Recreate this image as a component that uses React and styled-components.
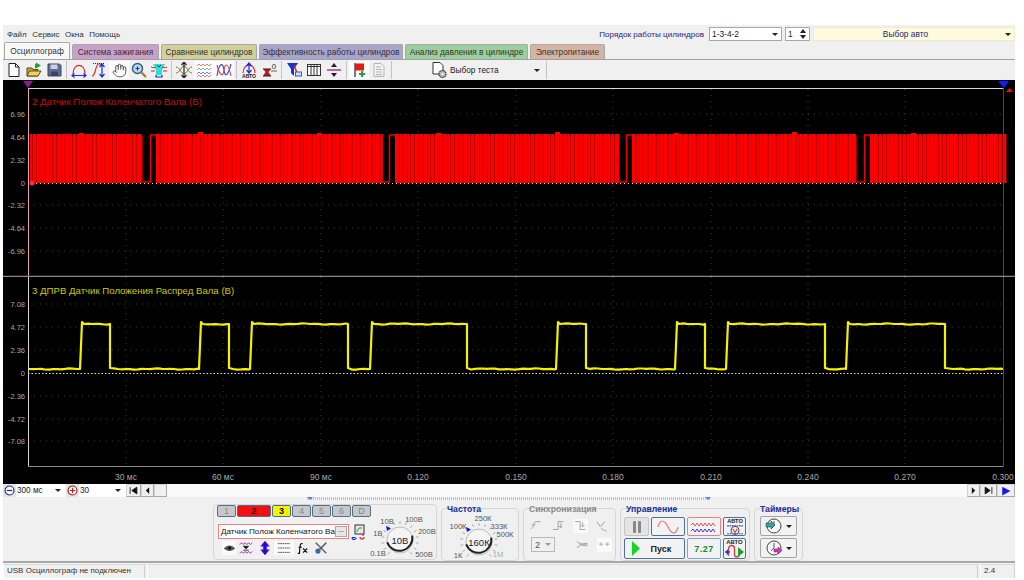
import React from "react";
import styled, { createGlobalStyle } from "styled-components";
import { Hand } from "lucide-react";

const GlobalStyle = createGlobalStyle`
  html, body { margin: 0; background: #fff; }
  body { font-family: "Liberation Sans", Arial, sans-serif; font-size: 8.2px; color: #222; }
`;

// window frame

const Window = styled.div`
  width: 1012px;
  height: 553px;
  margin: 25px 0 0 3px;
  background: #f0f0f0;
  display: flex;
  flex-direction: column;
  overflow: hidden;
`;

const TopBar = styled.div`
  height: 18px;
  display: flex;
  align-items: center;
  padding-left: 4px;
`;

const Menu = styled.div`
  display: flex;
  gap: 5.500px;
  margin-top: 1px;
  font-size: 8px;
  color: #333;
`;

const OrderBlock = styled.div`
  margin-left: auto;
  display: flex;
  align-items: center;
`;

const OrderLabel = styled.span`
  color: #26267e;
  font-size: 8.100px;
  margin-right: 5px;
`;

const Combo = styled.div`
  width: ${({ $w }) => $w}px;
  height: 14px;
  box-sizing: border-box;
  background: ${({ $bg }) => $bg || "#fff"};
  border: 1px solid ${({ $line }) => $line || "#a8a8a8"};
  display: flex;
  align-items: center;
  justify-content: space-between;
  padding: 0 3px 0 2px;
  font-size: 8.400px;
  margin-right: ${({ $last }) => ($last ? 0 : 3)}px;
  color: ${({ $ink }) => $ink || "#222"};
`;

const Chevron = styled.span`
  width: 0;
  height: 0;
  border-left: 3px solid transparent;
  border-right: 3px solid transparent;
  border-top: 3px solid #222;
  flex: none;
`;

const SpinArrows = styled.span`
  display: flex;
  flex-direction: column;
  gap: 2px;
  &::before, &::after {
    content: "";
    border-left: 3px solid transparent;
    border-right: 3px solid transparent;
  }
  &::before { border-bottom: 4px solid #222; }
  &::after { border-top: 4px solid #222; }
`;

const AutoLabel = styled.span`
  flex: 1;
  text-align: center;
  padding-right: 10px;
`;

// tabs

const TabRow = styled.div`
  height: 17px;
  display: flex;
  align-items: flex-end;
  padding-left: 1px;
  gap: 2px;
  border-bottom: 1px solid #a0a0a0;
  box-sizing: border-box;
`;

const Tab = styled.div`
  width: ${({ $w }) => $w}px;
  height: ${({ $active }) => ($active ? 17 : 15)}px;
  box-sizing: border-box;
  background: ${({ $bg }) => $bg};
  border: 1px solid #a8a8a8;
  border-bottom: none;
  border-radius: 2px 2px 0 0;
  display: flex;
  align-items: center;
  justify-content: center;
  font-size: 8.300px;
  color: #333;
  white-space: nowrap;
`;

// toolbar

const Toolbar = styled.div`
  height: 20px;
  display: flex;
  align-items: center;
  padding-left: 1px;
`;

const ToolBtn = styled.div`
  width: 20px;
  height: 18px;
  display: flex;
  align-items: center;
  justify-content: center;
  flex: none;
  background: ${({ $on }) => ($on ? "#fbfbfb" : "transparent")};
`;

const ToolSep = styled.div`
  width: 1px;
  height: 18px;
  background: #c4c4c4;
  margin: 0 2px;
  flex: none;
`;

const TestPicker = styled.div`
  width: 150px;
  height: 18px;
  display: flex;
  align-items: center;
  padding-left: 37px;
  padding-right: 4px;
  box-sizing: border-box;
  gap: 1px;
  font-size: 8.300px;
  & > span:last-child { margin-left: auto; }
`;

// scope

const Scope = styled.div`
  height: 404px;
  background: #000;
  display: flex;
  flex-direction: column;
`;

const Plot = styled.svg`
  display: block;
  flex: none;
`;

const AxisText = styled.text`
  font-family: "Liberation Sans", Arial, sans-serif;
  font-size: ${({ $size }) => $size || 7.5}px;
  fill: #a8a8a8;
`;

const TraceTitle = styled.text`
  font-family: "Liberation Sans", Arial, sans-serif;
  font-size: 9.650px;
  fill: ${({ $ink }) => $ink};
`;

const TimeBar = styled.div`
  height: 13px;
  display: flex;
  align-items: center;
  background: #f9f9f9;
`;

const TimeCombo = styled.div`
  width: ${({ $w }) => $w}px;
  height: 13px;
  background: #fff;
  display: flex;
  align-items: center;
  justify-content: space-between;
  padding: 0 5px 0 1px;
  box-sizing: border-box;
  font-size: 8.200px;
`;

const RoundBtn = styled.div`
  width: 13px;
  height: 13px;
  background: #e4e4e4;
  display: flex;
  align-items: center;
  justify-content: center;
`;

const NavBtn = styled.div`
  width: ${({ $w }) => $w || 14}px;
  height: 13px;
  box-sizing: border-box;
  background: #f0f0f0;
  border: 1px solid #d2d2d2;
  border-bottom-color: #a8a8a8;
  border-right-color: #a8a8a8;
  display: flex;
  align-items: center;
  justify-content: center;
`;

const Spacer = styled.div`
  flex: 1;
`;

// control panel

const Panel = styled.div`
  height: 64px;
  border-bottom: 2px solid #a8a8a8;
  box-sizing: content-box;
`;

const ScrollTrack = styled.div`
  width: 404px;
  height: 3px;
  margin: 0 0 0 304px;
  background: repeating-linear-gradient(90deg, #a9c5ea 0 1px, #f4f4f4 1px 2px);
  display: flex;
  justify-content: space-between;
  &::before, &::after {
    content: "";
    border-left: 3px solid transparent;
    border-right: 3px solid transparent;
    border-top: 3px solid #4d88e0;
  }
`;

const Groups = styled.div`
  display: flex;
  align-items: flex-start;
  padding: 4px 0 0 210px;
  gap: 4px;
`;

const Group = styled.div`
  width: ${({ $w }) => $w}px;
  height: ${({ $h }) => $h || 53}px;
  margin-top: ${({ $top }) => $top ?? 4}px;
  box-sizing: border-box;
  border: 1px solid #d6d6d6;
  border-radius: 4px;
  flex: none;
`;

const ChannelGroup = styled(Group)`
  display: flex;
`;

const GroupTitle = styled.div`
  margin: -4px 0 0 5px;
  height: 8px;
  line-height: 8px;
  font-size: 8.700px;
  font-weight: bold;
  white-space: nowrap;
  color: ${({ $ink }) => $ink || "#1a2e9a"};
`;

const ChannelRow = styled.div`
  display: flex;
  gap: 1px;
  padding: 0 0 0 3px;
`;

const ChannelBtn = styled.div`
  width: ${({ $w }) => $w || 19}px;
  height: 12px;
  box-sizing: border-box;
  background: ${({ $bg }) => $bg || "#c8c8c8"};
  border: 1px solid #4e6f8f;
  border-radius: 2px;
  display: flex;
  align-items: center;
  justify-content: center;
  font-size: 9px;
  font-weight: ${({ $bg }) => ($bg ? "bold" : "normal")};
  color: ${({ $bg }) => ($bg ? "#111" : "#888")};
`;

const ChannelLeft = styled.div`
  width: 160px;
  flex: none;
`;

const SensorRow = styled.div`
  display: flex;
  align-items: center;
  margin: 7px 0 0 4px;
`;

const SensorInput = styled.div`
  width: 131px;
  height: 15px;
  box-sizing: border-box;
  background: #fff;
  border: 1px solid #f08080;
  display: flex;
  align-items: center;
  justify-content: space-between;
  padding-left: 2px;
  font-size: 8.100px;
  color: #111;
  white-space: nowrap;
`;

const MoreBtn = styled.span`
  width: 12px;
  height: 11px;
  box-sizing: border-box;
  background: #e6e6e6;
  border: 1px solid #aaa;
  font-size: 7px;
  line-height: 6px;
  text-align: center;
  flex: none;
  margin-right: 1px;
`;

const IconRow = styled.div`
  display: flex;
  align-items: center;
  margin: 2px 0 0 8px;
`;

const SmallBtn = styled.div`
  width: ${({ $w }) => $w || 14}px;
  height: 14px;
  display: flex;
  align-items: center;
  justify-content: center;
  background: ${({ $on }) => ($on ? "#fafafa" : "transparent")};
  flex: none;
`;

const KnobSvg = styled.svg`
  display: block;
  overflow: visible;
  flex: none;
`;

const KnobText = styled.text`
  font-family: "Liberation Sans", Arial, sans-serif;
  font-size: ${({ $big }) => ($big ? 9.5 : 7.6)}px;
  fill: ${({ $muted, $big }) => ($muted ? "#aaa" : $big ? "#222" : "#555")};
  text-anchor: middle;
`;

const SyncBody = styled.div`
  padding: 6px 0 0 5px;
`;

const SyncRow = styled.div`
  display: flex;
  align-items: center;
  gap: 7px;
  margin-bottom: 4px;
`;

const SyncCombo = styled.div`
  width: 24px;
  height: 15px;
  box-sizing: border-box;
  border: 1px solid #b8b8b8;
  display: flex;
  align-items: center;
  justify-content: space-between;
  padding: 0 3px 0 3px;
  font-size: 9.500px;
  color: #555;
  margin: 0 13px 0 2px;
  & > span { border-top-color: #999; }
`;

const CtrlGrid = styled.div`
  display: grid;
  grid-template-columns: 25px 34px 34px 23px;
  grid-template-rows: 19px 21px;
  column-gap: 2px;
  row-gap: 2px;
  padding: 4px 0 0 3px;
`;

const CtrlBtn = styled.div`
  grid-column: ${({ $span }) => ($span ? `span ${$span}` : "auto")};
  box-sizing: border-box;
  border: 1px solid ${({ $line }) => $line || "#4e7296"};
  border-radius: 2px;
  background: ${({ $bg }) => $bg || "#f2f2f2"};
  display: flex;
  align-items: center;
  justify-content: center;
  font-size: 9px;
  font-weight: bold;
  color: ${({ $ink }) => $ink || "#222"};
  letter-spacing: ${({ $track }) => $track || 0}px;
`;

const RunLabel = styled.span`
  flex: 1;
  text-align: center;
  padding-right: 2px;
`;

const TimerStack = styled.div`
  display: flex;
  flex-direction: column;
  gap: 2px;
  padding: 3px 0 0 5px;
`;

const TimerBtn = styled.div`
  width: 37px;
  height: 20px;
  box-sizing: border-box;
  background: #f2f2f2;
  border: 1px solid #a4a4a4;
  border-radius: 2px;
  display: flex;
  align-items: center;
  gap: 3px;
  padding-left: 4px;
`;

// status bar

const StatusBar = styled.div`
  height: 14px;
  margin-top: 1px;
  display: flex;
  gap: 2px;
  font-size: 8px;
  color: #333;
`;

const StatusCell = styled.div`
  flex: ${({ $grow }) => ($grow ? 1 : "none")};
  width: ${({ $w }) => $w || 0}px;
  box-sizing: border-box;
  border-left: 1px solid #fff;
  border-top: 1px solid #dcdcdc;
  border-right: 1px solid #d0d0d0;
  padding: 1px 0 0 3px;
  white-space: nowrap;
`;

// icons

const Glyph = ({ children, size = 16, view = "0 0 16 16" }) => (
  <svg width={size} height={size} viewBox={view} fill="none">
    {children}
  </svg>
);

const Arrow2V = ({ x, y1, y2, c = "#1432d8" }) => (
  <path d={`M${x} ${y1}V${y2}M${x - 2.5} ${y1 + 3}L${x} ${y1}L${x + 2.5} ${y1 + 3}M${x - 2.5} ${y2 - 3}L${x} ${y2}L${x + 2.5} ${y2 - 3}`} stroke={c} strokeWidth="1.2" />
);

const IconNew = () => (
  <Glyph>
    <path d="M3 1.5h6.5l3.5 3.5v9.5H3z" fill="#fff" stroke="#222" />
    <path d="M9.5 1.5V5H13" stroke="#222" />
  </Glyph>
);
const IconOpen = () => (
  <Glyph>
    <path d="M1 14V6h5l1 1.5h5V14z" fill="#c9a540" stroke="#5c4c14" />
    <path d="M1 14l2.5-5H15l-3 5z" fill="#f0d060" stroke="#5c4c14" />
    <path d="M9 7V2.5l1-1v-1l5 3-5 3v-1z" fill="#1fa22e" />
  </Glyph>
);
const IconSave = () => (
  <Glyph>
    <path d="M2 2h11.5L15 3.5V14H2z" fill="#5f6c8e" stroke="#3c4660" />
    <rect x="4.5" y="2.5" width="7" height="4.5" fill="#c9d0e2" />
    <rect x="5" y="9.5" width="7" height="4.5" fill="#39425e" />
  </Glyph>
);
const IconArc = () => (
  <Glyph>
    <path d="M2 12C2 .5 14 .5 14 12" stroke="#e02020" strokeWidth="1.1" />
    <path d="M1 13.5h14M3.5 11.5l-2.5 2 2.5 2M12.5 11.5l2.5 2-2.5 2" stroke="#1432d8" strokeWidth="1.2" />
  </Glyph>
);
const IconArcFit = () => (
  <Glyph>
    <path d="M1 14c4 0 3-12 7-12h2" stroke="#e02020" strokeWidth="1.1" />
    <path d="M2 1.5h12" stroke="#333" strokeDasharray="1 1" />
    <Arrow2V x={11} y1={2} y2={15} />
  </Glyph>
);
const IconZoom = () => (
  <Glyph>
    <circle cx="6.5" cy="6.5" r="5" fill="#bcd7ee" stroke="#365a7e" strokeWidth="1.4" />
    <path d="M4.5 6.5h4M6.5 4.5v4" stroke="#1c3f9c" strokeWidth="1.2" />
    <path d="M10.5 10.5l4.5 4.5" stroke="#a07c30" strokeWidth="2.2" />
  </Glyph>
);
const IconCapture = () => (
  <Glyph>
    <path d="M2 2h12l-3 6v5H5V8z" fill="#28e0d8" />
    <path d="M0 5c3 2 4-1 5 1M11 6c1-2 2 1 5-1M0 9h4M12 9h4" stroke="#e02020" />
    <path d="M5 13v2h6v-2" stroke="#1432d8" strokeWidth="1.2" />
    <path d="M6 3l2 2 2-2" stroke="#222" />
  </Glyph>
);
const IconCross = () => (
  <Glyph>
    <path d="M0 5c4 0 5 7 8 7M16 11c-4 0-5-7-8-7" stroke="#2aa84a" />
    <path d="M0 11c4 0 5-7 8-7M16 5c-4 0-5 7-8 7" stroke="#e04040" />
    <Arrow2V x={8} y1={0} y2={16} c="#222" />
  </Glyph>
);
const IconStack = () => (
  <Glyph>
    <path d="M1 4l2-2 2 2 2-2 2 2 2-2 2 2 2-2" stroke="#e06060" strokeWidth=".8" />
    <path d="M1 8l2-2 2 2 2-2 2 2 2-2 2 2 2-2" stroke="#4ab86a" strokeWidth=".8" />
    <path d="M1 12l2-2 2 2 2-2 2 2 2-2 2 2 2-2" stroke="#5060e0" strokeWidth=".8" />
    <path d="M1 15l2-2 2 2 2-2 2 2 2-2 2 2 2-2" stroke="#e06060" strokeWidth=".8" />
  </Glyph>
);
const IconLoops = () => (
  <Glyph>
    <path d="M1 14C3 0 7 0 8 8s4 6 7-6" stroke="#3048d8" strokeWidth="1.1" />
    <path d="M1 3c3 12 6 12 7 5s4-8 7 6" stroke="#e04040" strokeWidth="1.1" />
  </Glyph>
);
const IconAuto = () => (
  <Glyph>
    <path d="M2 11C2 .5 14 .5 14 11" stroke="#e02020" strokeWidth="1.1" />
    <Arrow2V x={8} y1={1} y2={11} />
    <text x="8" y="15.5" fontSize="5" fontWeight="bold" textAnchor="middle" fill="#222" fontFamily="Liberation Sans">АВТО</text>
  </Glyph>
);
const IconZero = () => (
  <Glyph>
    <path d="M2 7h8L7.5 10 10 14H2l2.500-4z" fill="#c01818" />
    <path d="M2 7h8M2 14h8" stroke="#222" />
    <text x="13" y="7" fontSize="8" textAnchor="middle" fill="#333" fontFamily="Liberation Sans">0</text>
    <path d="M10 9h6" stroke="#666" />
  </Glyph>
);
const IconFilter = () => (
  <Glyph>
    <path d="M1 1h11L8 7v7L5 11V7z" fill="#1432d8" />
    <path d="M8 3l3 8" stroke="#e02020" strokeWidth="1.4" />
    <rect x="9.5" y="10" width="6" height="4" fill="#cfe0f4" stroke="#3060b0" />
  </Glyph>
);
const IconTable = () => (
  <Glyph>
    <rect x="1.5" y="2.500" width="13" height="11" fill="#fff" stroke="#333" />
    <path d="M1.500 4.500h13M5 3v10M8 3v10M11 3v10" stroke="#333" />
  </Glyph>
);
const IconSplit = () => (
  <Glyph>
    <path d="M1 8h14" stroke="#a020a0" strokeWidth="1.4" />
    <path d="M8 1l3 4H5zM8 15l3-4H5z" fill="#222" />
  </Glyph>
);
const IconFlag = () => (
  <Glyph>
    <path d="M4 1v14" stroke="#444" strokeWidth="1.4" />
    <path d="M4 1.500h9v7H4z" fill="#ef1515" />
    <path d="M11 9v6M8 12h6" stroke="#18a838" strokeWidth="2" />
  </Glyph>
);
const IconNotes = () => (
  <Glyph>
    <path d="M3 1.500h7l3 3v10H3z" fill="#f4f4f4" stroke="#b4b4b4" />
    <path d="M5 5h5M5 7.500h6M5 10h6M5 12.500h6" stroke="#b0b0b0" />
  </Glyph>
);
const IconTest = () => (
  <Glyph size={18} view="0 0 18 18">
    <path d="M2 1.500h7l3 3V13H2z" fill="#fff" stroke="#333" />
    <circle cx="11.500" cy="13" r="3.500" fill="#bbb" stroke="#333" strokeWidth="1.200" strokeDasharray="1.500 .6" />
    <circle cx="11.500" cy="13" r="1" fill="#fff" />
  </Glyph>
);
const IconEye = () => (
  <Glyph size={13}>
    <path d="M1 8c4-5 10-5 14 0-4 4-10 4-14 0z" fill="#555" />
    <circle cx="8" cy="7.500" r="2" fill="#111" />
  </Glyph>
);
const IconAmp = () => (
  <Glyph size={14}>
    <path d="M1 4l2-2 2 2 2-2 2 2 2-2 2 2 2-2M1 14l2-2 2 2 2-2 2 2 2-2 2 2 2-2" stroke="#a014a0" />
    <path d="M5 6h6L8 9zM5 10.500h6" fill="#222" stroke="#222" />
  </Glyph>
);
const IconShift = () => (
  <Glyph size={14}>
    <path d="M8 0l5 6h-3v4h3l-5 6-5-6h3V6H3z" fill="#1414d0" stroke="#a014a0" strokeWidth=".6" />
  </Glyph>
);
const IconLines = () => (
  <Glyph size={14}>
    <path d="M1 3h14M1 8h14M1 13h14" stroke="#444" strokeDasharray="2 .6" />
  </Glyph>
);
const IconFx = () => (
  <Glyph size={13}>
    <path d="M7 2c-3-1-3 2-3.500 5L3 14H1M2 6.500h4M7.500 8l5 5M12.500 8l-5 5" stroke="#111" strokeWidth="1.400" />
  </Glyph>
);
const IconTools = () => (
  <Glyph size={14}>
    <path d="M2 2l12 12" stroke="#666" strokeWidth="1.800" />
    <path d="M14 2L6 10" stroke="#555" strokeWidth="1.800" />
    <circle cx="4.500" cy="11.500" r="3" fill="#3a68b0" />
  </Glyph>
);
const IconProbe = () => (
  <Glyph>
    <rect x="4" y="1" width="9" height="9" fill="#e8e8e8" stroke="#333" />
    <path d="M5.500 8L8 4h3" stroke="#2a9a4a" />
    <path d="M1 13.500a2 2 0 1 0 4 0M1 13.500h3" stroke="#1432d8" strokeWidth="1.200" />
    <path d="M9 13a2 2 0 1 0 4 0M12 10v2" stroke="#e02020" strokeWidth="1.200" />
  </Glyph>
);
const SyncIcon = ({ d, on }) => (
  <SmallBtn $w={15} $on={on}>
    <Glyph size={14}>
      <path d={d} stroke="#a2a2a2" strokeWidth="1.100" />
    </Glyph>
  </SmallBtn>
);
const IconSine = () => (
  <svg width="24" height="14" viewBox="0 0 24 14" fill="none">
    <path d="M2 7C4-1 8-1 12 7s8 8 10 0" stroke="#ef7070" strokeWidth="1.100" />
  </svg>
);
const IconPairWave = () => (
  <svg width="28" height="14" viewBox="0 0 28 14" fill="none">
    <path d="M1 5l2-2 2 3 2-3 2 3 2-3 2 3 2-3 2 3 2-3 2 3 2-3 2 3" stroke="#e04040" strokeWidth=".9" />
    <path d="M1 11l2-2 2 3 2-3 2 3 2-3 2 3 2-3 2 3 2-3 2 3 2-3 2 3" stroke="#2a2ad8" strokeWidth=".9" />
  </svg>
);
const IconPause = () => (
  <svg width="10" height="12" viewBox="0 0 10 12">
    <rect x="1" y="0" width="3" height="12" rx="1" fill="#888" />
    <rect x="6" y="0" width="3" height="12" rx="1" fill="#888" />
  </svg>
);
const RunTriangle = styled.svg`
  margin-left: 7px;
  flex: none;
`;
const IconRun = () => (
  <RunTriangle width="8" height="15" viewBox="0 0 8 15">
    <path d="M0 0l8 7.500L0 15z" fill="#10d820" />
  </RunTriangle>
);
const IconAutoScale = () => (
  <Glyph size={18}>
    <text x="8" y="4.500" fontSize="5" fontWeight="bold" textAnchor="middle" fill="#222" fontFamily="Liberation Sans">АВТО</text>
    <path d="M1 7h14M1 14h14" stroke="#2a48d8" strokeDasharray="1.500 .6" />
    <circle cx="8" cy="11" r="3.500" stroke="#555" />
    <path d="M6 9.500L8 13l2-3.500" stroke="#e04040" />
  </Glyph>
);
const IconAutoRun = () => (
  <Glyph size={19}>
    <text x="8" y="4.500" fontSize="5" fontWeight="bold" textAnchor="middle" fill="#222" fontFamily="Liberation Sans">АВТО</text>
    <path d="M3 14V8a2.500 2.500 0 0 1 5 0v5a2 2 0 0 0 4 0" stroke="#d04040" strokeWidth="1.200" />
    <path d="M0 11h4M2 9v4" stroke="#1432d8" strokeWidth="1.200" />
    <path d="M11 7l5 4-5 4z" fill="#10a820" />
  </Glyph>
);
const IconClock = ({ pointer, from }) => (
  <svg width="18" height="16" viewBox="0 0 18 16" fill="none">
    <circle cx="9" cy="8" r="7" fill="#f8f8f8" stroke="#444" />
    <path d="M9 3v5l-3 3" stroke="#555" />
    <path d={from ? "M1 5h5V3l4 4-4 4V9H1z" : "M9 9h4V7l4 3.500L13 14v-2H9z"} fill={pointer} stroke="#333" strokeWidth=".5" />
  </svg>
);

// chart data

const GRID_X = [126, 223, 321, 418, 516, 613, 711, 808, 905];
const PLOT_LEFT = 28;
const PLOT_RIGHT = 1003;
const CRANK_GAPS = [145, 384, 621, 859];

const crankTeeth = () => {
  let path = "";
  let x = 30;
  let step = 0;
  while (x < PLOT_RIGHT) {
    const gap = CRANK_GAPS.find((start) => x >= start - 3 && x < start + 11);
    if (gap) {
      x = gap + 11;
    } else {
      const width = 2.4 + ((step * 7) % 5) * 0.5;
      path += `M${x.toFixed(1)} 134h${width}v49h-${width}z`;
      x += width + 0.6;
    }
    step += 1;
  }
  return path;
};

// dim fill between the teeth, black only inside the missing-tooth gaps
const crankBase = () => {
  let path = "";
  let from = 30;
  CRANK_GAPS.forEach((gap) => {
    path += `M${from} 136H${gap - 2}V183H${from}z`;
    from = gap + 11;
  });
  return `${path}M${from} 136H${PLOT_RIGHT - 1}V183H${from}z`;
};

const crankGapTrace = () =>
  CRANK_GAPS.map((gap) => `M${gap - 2} 182H${gap + 5.5}V135H${gap + 11}`).join("");

const jitter = (seed) => Math.sin(seed * 1.7) * 0.4 + Math.sin(seed * 0.43) * 0.3;

const camEdges = [
  [82, 110],
  [201, 229],
  [252, 348],
  [372, 467],
  [558, 586],
  [677, 705],
  [728, 825],
  [848, 945],
];

const camPath = () => {
  let path = `M29 369`;
  const flat = (from, to, y) => {
    for (let x = from + 4; x < to; x += 4) path += `L${x} ${(y + jitter(x)).toFixed(1)}`;
    path += `L${to} ${y}`;
  };
  let cursor = 29;
  camEdges.forEach(([rise, fall]) => {
    flat(cursor, rise - 2, 369);
    path += `L${rise} 322L${rise + 2} 324`;
    flat(rise + 2, fall, 324);
    path += `L${fall} 368`;
    cursor = fall;
  });
  flat(cursor, PLOT_RIGHT, 369);
  return path;
};

const ChartGrid = ({ top, bottom, rows }) => (
  <g stroke="#3c3c3c" strokeDasharray="1 5">
    {GRID_X.map((x) => (
      <path key={x} d={`M${x} ${top}V${bottom}`} />
    ))}
    {rows.map((row) => (
      <path key={row.label} d={`M${PLOT_LEFT} ${row.y}H${PLOT_RIGHT}`} />
    ))}
  </g>
);

const RowLabels = ({ rows }) =>
  rows.map((row) => (
    <AxisText key={row.label} x={25} y={row.y + 3} textAnchor="end">
      {row.label}
    </AxisText>
  ));

const CRANK_ROWS = [
  { label: "6.96", y: 114 },
  { label: "4.64", y: 137 },
  { label: "2.32", y: 160 },
  { label: "-2.32", y: 205 },
  { label: "-4.64", y: 228 },
  { label: "-6.96", y: 251 },
];

const CAM_ROWS = [
  { label: "7.08", y: 304 },
  { label: "4.72", y: 327 },
  { label: "2.36", y: 350 },
  { label: "-2.36", y: 396 },
  { label: "-4.72", y: 419 },
  { label: "-7.08", y: 441 },
];

const CrankPlot = () => (
  <Plot width="1012" height="197" viewBox="3 80 1012 197">
    <ChartGrid top={89} bottom={276} rows={CRANK_ROWS} />
    <path d={`M${PLOT_LEFT} 88.500H${PLOT_RIGHT}`} stroke="#d8d8d8" />
    <path d={`M${PLOT_LEFT} 183.500H${PLOT_RIGHT}`} stroke="#ddd" strokeDasharray="1 3" />
    <path d={crankBase()} fill="#8c0000" />
    <path d={crankTeeth()} fill="#ff0000" />
    <path d={crankGapTrace()} stroke="#ee0000" strokeWidth="1.500" fill="none" />
    <path d="M79 133h5v3h-5zM198 132h5v3h-5zM317 133h5v3h-5zM436 133h5v3h-5zM555 132h5v3h-5zM674 133h5v3h-5zM792 132h5v3h-5zM911 133h5v3h-5z" fill="#ff0000" />
    <circle cx="32" cy="183" r="2.500" fill="#ff3030" />
    <path d={`M${PLOT_LEFT + 0.5} 88V276`} stroke="#e8a0c0" />
    <path d={`M${PLOT_RIGHT + 0.5} 88V276`} stroke="#3030ff" />
    <path d="M23 81h10l-5 7z" fill="#8a1a9a" />
    <path d="M998 81h11l-5 7z" fill="#1818ff" />
    <path d="M1006 92l3.500-4 3.500 4z" fill="#ee1010" />
    <RowLabels rows={CRANK_ROWS} />
    <AxisText x={25} y={186} textAnchor="end">0</AxisText>
    <TraceTitle x={32} y={104.500} $ink="#c80c0c">2 Датчик Полож Коленчатого Вала (В)</TraceTitle>
    <path d="M3 276.500H1015" stroke="#8a8a8a" strokeWidth="1.500" />
  </Plot>
);

const CamPlot = () => (
  <Plot width="1012" height="190" viewBox="3 277 1012 190">
    <ChartGrid top={277} bottom={466} rows={CAM_ROWS} />
    <path d={`M${PLOT_LEFT} 373.500H${PLOT_RIGHT}`} stroke="#ddd" strokeDasharray="1.500 2" />
    <path d={camPath()} stroke="#f4f000" strokeWidth="2.200" strokeLinejoin="round" fill="none" />
    <path d={`M${PLOT_LEFT + 0.5} 277V467`} stroke="#d8d8d8" />
    <path d={`M${PLOT_RIGHT + 0.5} 277V467`} stroke="#3030ff" />
    <RowLabels rows={CAM_ROWS} />
    <AxisText x={25} y={376} textAnchor="end">0</AxisText>
    <TraceTitle x={32} y={293.500} $ink="#cccc00">3 ДПРВ Датчик Положения Распред Вала (В)</TraceTitle>
    <path d={`M${PLOT_LEFT} 466.500H${PLOT_RIGHT}`} stroke="#8a8a8a" />
  </Plot>
);

const TIME_TICKS = [
  [126, "30 мс"],
  [223, "60 мс"],
  [321, "90 мс"],
  [418, "0.120"],
  [516, "0.150"],
  [613, "0.180"],
  [711, "0.210"],
  [808, "0.240"],
  [905, "0.270"],
  [1003, "0.300"],
];

const TimeAxis = () => (
  <Plot width="1012" height="17" viewBox="3 467 1012 17">
    {TIME_TICKS.map(([x, label]) => (
      <AxisText key={x} x={x} y={480} textAnchor="middle" $size={8.5}>
        {label}
      </AxisText>
    ))}
  </Plot>
);

// knobs

const polar = (cx, cy, r, deg) => {
  const rad = (deg * Math.PI) / 180;
  return [cx + Math.cos(rad) * r, cy + Math.sin(rad) * r];
};

const Knob = ({ width, height, cx, cy, value, labels, pointer }) => {
  const ticks = [];
  for (let a = 130; a <= 410; a += 20) {
    const [x1, y1] = polar(cx, cy, 16, a);
    const [x2, y2] = polar(cx, cy, 19, a);
    ticks.push(<path key={a} d={`M${x1} ${y1}L${x2} ${y2}`} stroke="#aaa" />);
  }
  const [darkStartX, darkStartY] = polar(cx, cy, 13, -20);
  const [darkEndX, darkEndY] = polar(cx, cy, 13, 170);
  return (
    <KnobSvg width={width} height={height} viewBox={`0 0 ${width} ${height}`}>
      {ticks}
      <circle cx={cx} cy={cy} r="13" fill="#f4f4f4" stroke="#bbb" />
      <path
        d={`M${darkStartX} ${darkStartY}A13 13 0 0 1 ${darkEndX} ${darkEndY}`}
        stroke="#222"
        strokeWidth="2"
        fill="none"
      />
      <path d={`M${pointer[0]} ${pointer[1]}l5 2.500-4 2.500z`} fill="#1414e0" />
      <KnobText $big x={cx} y={cy + 4}>{value}</KnobText>
      {labels.map(([x, y, label, muted]) => (
        <KnobText key={label} x={x} y={y} $muted={muted}>
          {label}
        </KnobText>
      ))}
    </KnobSvg>
  );
};

const VOLT_LABELS = [
  [13, 19, "10В"],
  [40, 17, "100В"],
  [4, 31, "1В"],
  [53, 29, "200В"],
  [4, 51, "0.1В"],
  [50, 52, "500В"],
];

const FREQ_LABELS = [
  [41, 8, "250К"],
  [16, 16, "100К"],
  [57, 16, "333К"],
  [63, 24, "500К"],
  [16, 45, "1К"],
  [56, 44, "1М", true],
];

const TABS = [
  ["Осциллограф", 66, "#f8f8f8", true],
  ["Система зажигания", 87, "#c8a0c8"],
  ["Сравнение цилиндров", 96, "#d2cf98"],
  ["Эффективность работы цилиндров", 144, "#a8a4cb"],
  ["Анализ давления в цилиндре", 123, "#9ccf9c"],
  ["Электропитание", 75, "#d6b4a2"],
];

const CHANNELS = [
  { label: "1" },
  { label: "2", bg: "#f01010", w: 34 },
  { label: "3", bg: "#f4f400" },
  { label: "4" },
  { label: "5" },
  { label: "6" },
  { label: "D" },
];

const App = () => {
  return (
    <>
      <GlobalStyle />
      <Window>
        <TopBar>
          <Menu>
            <span>Файл</span>
            <span>Сервис</span>
            <span>Окна</span>
            <span>Помощь</span>
          </Menu>
          <OrderBlock>
            <OrderLabel>Порядок работы цилиндров</OrderLabel>
            <Combo $w={73}>
              1-3-4-2
              <Chevron />
            </Combo>
            <Combo $w={25}>
              1
              <SpinArrows />
            </Combo>
            <Combo $w={202} $last $bg="#fdfbdc" $line="#eeeccc" $ink="#26267e">
              <AutoLabel>Выбор авто</AutoLabel>
              <Chevron />
            </Combo>
          </OrderBlock>
        </TopBar>

        <TabRow>
          {TABS.map(([label, width, color, active]) => (
            <Tab key={label} $w={width} $bg={color} $active={active}>
              {label}
            </Tab>
          ))}
        </TabRow>

        <Toolbar>
          <ToolBtn><IconNew /></ToolBtn>
          <ToolBtn><IconOpen /></ToolBtn>
          <ToolBtn><IconSave /></ToolBtn>
          <ToolSep />
          <ToolBtn><IconArc /></ToolBtn>
          <ToolBtn><IconArcFit /></ToolBtn>
          <ToolBtn $on><Hand size={15} color="#333" strokeWidth={1.3} /></ToolBtn>
          <ToolBtn><IconZoom /></ToolBtn>
          <ToolBtn><IconCapture /></ToolBtn>
          <ToolSep />
          <ToolBtn><IconCross /></ToolBtn>
          <ToolBtn $on><IconStack /></ToolBtn>
          <ToolBtn $on><IconLoops /></ToolBtn>
          <ToolSep />
          <ToolBtn><IconAuto /></ToolBtn>
          <ToolBtn><IconZero /></ToolBtn>
          <ToolSep />
          <ToolBtn><IconFilter /></ToolBtn>
          <ToolBtn><IconTable /></ToolBtn>
          <ToolBtn><IconSplit /></ToolBtn>
          <ToolSep />
          <ToolBtn $on><IconFlag /></ToolBtn>
          <ToolBtn><IconNotes /></ToolBtn>
          <ToolSep />
          <TestPicker>
            <IconTest />
            Выбор теста
            <Chevron />
          </TestPicker>
          <ToolSep />
        </Toolbar>

        <Scope>
          <CrankPlot />
          <CamPlot />
          <TimeAxis />
        </Scope>

        <TimeBar>
          <RoundBtn>
            <Glyph size={11}>
              <circle cx="8" cy="8" r="6.500" fill="#fff" stroke="#1c2c7c" strokeWidth="1.600" />
              <path d="M4 8h8" stroke="#1c2c7c" strokeWidth="1.800" />
            </Glyph>
          </RoundBtn>
          <TimeCombo $w={50}>
            300 мс
            <Chevron />
          </TimeCombo>
          <RoundBtn>
            <Glyph size={11}>
              <circle cx="8" cy="8" r="6.500" fill="#fff" stroke="#8c1c1c" strokeWidth="1.600" />
              <path d="M4 8h8M8 4v8" stroke="#c81c1c" strokeWidth="1.800" />
            </Glyph>
          </RoundBtn>
          <TimeCombo $w={47}>
            30
            <Chevron />
          </TimeCombo>
          <NavBtn $w={15}>
            <Glyph size={9}><path d="M2 2v12M14 2L5 8l9 6z" fill="#111" stroke="#111" strokeWidth="1.500" /></Glyph>
          </NavBtn>
          <NavBtn $w={13}>
            <Glyph size={9}><path d="M11 2L5 8l6 6z" fill="#111" /></Glyph>
          </NavBtn>
          <NavBtn $w={13} />
          <Spacer />
          <NavBtn $w={13}>
            <Glyph size={9}><path d="M5 2l6 6-6 6z" fill="#111" /></Glyph>
          </NavBtn>
          <NavBtn $w={17}>
            <Glyph size={9}><path d="M14 2v12M2 2l9 6-9 6z" fill="#111" stroke="#111" strokeWidth="1.500" /></Glyph>
          </NavBtn>
          <NavBtn $w={18}>
            <Glyph size={10}><path d="M2 1l13 7-13 7z" fill="#1414f0" /></Glyph>
          </NavBtn>
        </TimeBar>

        <Panel>
          <ScrollTrack />
          <Groups>
            <ChannelGroup $w={224} $h={56} $top={0}>
              <ChannelLeft>
                <ChannelRow>
                  {CHANNELS.map((channel) => (
                    <ChannelBtn key={channel.label} $bg={channel.bg} $w={channel.w}>
                      {channel.label}
                    </ChannelBtn>
                  ))}
                </ChannelRow>
                <SensorRow>
                  <SensorInput>
                    <span>Датчик Полож Коленчатого Ва</span>
                    <MoreBtn>...</MoreBtn>
                  </SensorInput>
                  <SmallBtn $w={20}><IconProbe /></SmallBtn>
                </SensorRow>
                <IconRow>
                  <SmallBtn $on><IconEye /></SmallBtn>
                  <SmallBtn $w={20}><IconAmp /></SmallBtn>
                  <SmallBtn $w={18}><IconShift /></SmallBtn>
                  <SmallBtn $w={20} $on><IconLines /></SmallBtn>
                  <SmallBtn $w={18}><IconFx /></SmallBtn>
                  <SmallBtn $w={18}><IconTools /></SmallBtn>
                </IconRow>
              </ChannelLeft>
              <Knob width={62} height={54} cx={26} cy={35} value="10В" labels={VOLT_LABELS} pointer={[12, 21]} />
            </ChannelGroup>

            <Group $w={78}>
              <GroupTitle>Частота</GroupTitle>
              <Knob width={74} height={46} cx={37} cy={29} value="160К" labels={FREQ_LABELS} pointer={[24, 14]} />
            </Group>

            <Group $w={93}>
              <GroupTitle $ink="#8a8a8a">Синхронизация</GroupTitle>
              <SyncBody>
                <SyncRow>
                  <SyncIcon d="M1 11c4 0 2-8 6-8h5M2 6l2 2 2-2" />
                  <SyncIcon d="M1 12h6V3h6M10 5v5M8 8l2 2 2-2" />
                  <SyncIcon on d="M1 3h6v9h6M10 4v5M8 7l2 2 2-2" />
                  <SyncIcon d="M1 3l4 6 5-6M6 11l6 3" />
                </SyncRow>
                <SyncRow>
                  <SyncCombo>
                    2
                    <Chevron />
                  </SyncCombo>
                  <SyncIcon d="M1 4l5 3 7-1M1 11l5-3 7 1M4 7h9" />
                  <SyncIcon on d="M1 7h4M9 7h4M3 5l2 2-2 2M11 5L9 7l2 2" />
                </SyncRow>
              </SyncBody>
            </Group>

            <Group $w={130}>
              <GroupTitle>Управление</GroupTitle>
              <CtrlGrid>
                <CtrlBtn $line="#c4c4c4" $bg="#e4e4e4"><IconPause /></CtrlBtn>
                <CtrlBtn><IconSine /></CtrlBtn>
                <CtrlBtn $line="#ee8080"><IconPairWave /></CtrlBtn>
                <CtrlBtn><IconAutoScale /></CtrlBtn>
                <CtrlBtn $span={2}>
                  <IconRun />
                  <RunLabel>Пуск</RunLabel>
                </CtrlBtn>
                <CtrlBtn $line="#7ca6d0" $ink="#148a28" $track={0.5}>7.27</CtrlBtn>
                <CtrlBtn><IconAutoRun /></CtrlBtn>
              </CtrlGrid>
            </Group>

            <Group $w={49}>
              <GroupTitle>Таймеры</GroupTitle>
              <TimerStack>
                <TimerBtn>
                  <IconClock pointer="#2aa8a0" from />
                  <Chevron />
                </TimerBtn>
                <TimerBtn>
                  <IconClock pointer="#e030c8" />
                  <Chevron />
                </TimerBtn>
              </TimerStack>
            </Group>
          </Groups>
        </Panel>

        <StatusBar>
          <StatusCell $w={142}>USB Осциллограф не подключен</StatusCell>
          <StatusCell $grow />
          <StatusCell $w={35}>2.4</StatusCell>
        </StatusBar>
      </Window>
    </>
  );
};

export default App;
